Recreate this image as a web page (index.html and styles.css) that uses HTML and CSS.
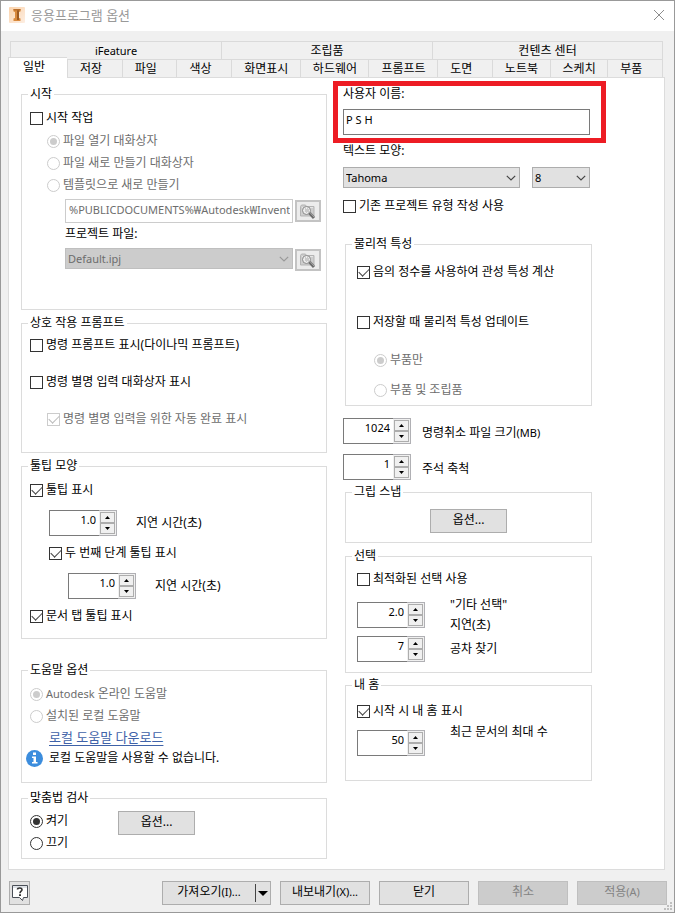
FILE: index.html
```html
<!DOCTYPE html>
<html lang="ko">
<head>
<meta charset="utf-8">
<title>응용프로그램 옵션</title>
<link rel="stylesheet" href="styles.css">
</head>
<body>
<svg class="defs" aria-hidden="true">
  <symbol id="browse" viewBox="0 0 18 18">
    <path d="M1.500 14V4.500l1-1.500h4l1 1.500h7.500v9.500z" fill="#cecece" stroke="#b4b4b4"/>
    <path d="M3 5.500h11" stroke="#e6e6e6"/>
    <circle cx="7.500" cy="8.500" r="4" fill="#ececec" stroke="#8a8a8a"/>
    <path d="M6 7h1M8 7h1M7 8h1M9 8h1M6 9h1M8 9h1M7 10h1M9 10h1" stroke="#a8a8a8"/>
    <path d="M10.500 11l4.500 5" stroke="#6c6c6c" stroke-width="3"/>
    <path d="M11 10.500l4 4.500" stroke="#a9a9a9"/>
  </symbol>
  <symbol id="chevron" viewBox="0 0 10 6">
    <path d="M.8.8L5 5 9.200.8" fill="none" stroke="currentColor" stroke-width="1.200"/>
  </symbol>
  <symbol id="up" viewBox="0 0 5 3"><path d="M0 3L2.500 0 5 3z" fill="#000"/></symbol>
  <symbol id="down" viewBox="0 0 5 3"><path d="M0 0h5L2.500 3z" fill="#000"/></symbol>
</svg>
<main class="window">
  <header class="titlebar">
    <svg class="app-icon" viewBox="0 0 16 16" aria-hidden="true">
      <defs><linearGradient id="tile" x1="0" y1="0" x2="1" y2="1"><stop offset="0" stop-color="#fbd3ac"/><stop offset="1" stop-color="#fdeee2"/></linearGradient></defs>
      <rect width="16" height="16" rx="1" fill="url(#tile)"/>
      <path d="M4.500 2h7v2.500l-1.500.5v6l1.500.5V14h-7v-2.500L6 11V5l-1.500-.5z" fill="#d98a3d"/>
      <path d="M8 3h2v10H8z" fill="#9c5a22"/>
      <path d="M4.500 2h7v1.500h-7z" fill="#b96f2c"/>
    </svg>
    <h1>응용프로그램 옵션</h1>
    <button class="close" type="button" aria-label="닫기">
      <svg viewBox="0 0 12 12" aria-hidden="true"><path d="M1 1l10 10M11 1L1 11" stroke="#8c8c8c" fill="none"/></svg>
    </button>
  </header>

  <nav class="tabs" role="tablist">
    <div class="tab-row top">
      <button class="tab" type="button" role="tab"><span class="latin">iFeature</span></button>
      <button class="tab" type="button" role="tab">조립품</button>
      <button class="tab wide" type="button" role="tab">컨텐츠 센터</button>
    </div>
    <div class="tab-row">
      <button class="tab selected" type="button" role="tab" aria-selected="true">일반</button>
      <button class="tab" type="button" role="tab">저장</button>
      <button class="tab" type="button" role="tab">파일</button>
      <button class="tab" type="button" role="tab">색상</button>
      <button class="tab long" type="button" role="tab">화면표시</button>
      <button class="tab long" type="button" role="tab">하드웨어</button>
      <button class="tab long" type="button" role="tab">프롬프트</button>
      <button class="tab" type="button" role="tab">도면</button>
      <button class="tab medium" type="button" role="tab">노트북</button>
      <button class="tab medium" type="button" role="tab">스케치</button>
      <button class="tab" type="button" role="tab">부품</button>
    </div>
  </nav>

  <form class="panel">
    <div class="column left">
      <fieldset class="start">
        <legend>시작</legend>
        <label class="row"><input type="checkbox">시작 작업</label>
        <div class="nested">
          <label class="row"><input type="radio" name="startup" checked disabled>파일 열기 대화상자</label>
          <label class="row"><input type="radio" name="startup" disabled>파일 새로 만들기 대화상자</label>
          <label class="row"><input type="radio" name="startup" disabled>템플릿으로 새로 만들기</label>
        </div>
        <div class="files">
          <div class="file-row">
            <input class="text path" type="text" aria-label="템플릿 경로" disabled value="%PUBLICDOCUMENTS%₩Autodesk₩Inventor">
            <button class="browse" type="button" aria-label="템플릿 찾아보기"><svg aria-hidden="true"><use href="#browse"/></svg></button>
          </div>
          <label class="row" for="project">프로젝트 파일:</label>
          <div class="file-row">
            <div class="select"><select id="project" disabled><option>Default.ipj</option></select><svg aria-hidden="true"><use href="#chevron"/></svg></div>
            <button class="browse" type="button" aria-label="프로젝트 찾아보기"><svg aria-hidden="true"><use href="#browse"/></svg></button>
          </div>
        </div>
      </fieldset>

      <fieldset class="prompts">
        <legend>상호 작용 프롬프트</legend>
        <label class="row"><input type="checkbox">명령 프롬프트 표시(다이나믹 프롬프트)</label>
        <label class="row"><input type="checkbox">명령 별명 입력 대화상자 표시</label>
        <label class="row nested"><input type="checkbox" checked disabled>명령 별명 입력을 위한 자동 완료 표시</label>
      </fieldset>

      <fieldset class="tooltips">
        <legend>툴팁 모양</legend>
        <label class="row"><input type="checkbox" checked>툴팁 표시</label>
        <div class="spin-row indent">
          <div class="spinner"><input id="delay1" type="text" value="1.0"><span class="arrows"><button type="button" aria-label="증가"><svg><use href="#up"/></svg></button><button type="button" aria-label="감소"><svg><use href="#down"/></svg></button></span></div>
          <label for="delay1">지연 시간(초)</label>
        </div>
        <label class="row indent"><input type="checkbox" checked>두 번째 단계 툴팁 표시</label>
        <div class="spin-row indent-more">
          <div class="spinner"><input id="delay2" type="text" value="1.0"><span class="arrows"><button type="button" aria-label="증가"><svg><use href="#up"/></svg></button><button type="button" aria-label="감소"><svg><use href="#down"/></svg></button></span></div>
          <label for="delay2">지연 시간(초)</label>
        </div>
        <label class="row"><input type="checkbox" checked>문서 탭 툴팁 표시</label>
      </fieldset>

      <fieldset class="help">
        <legend>도움말 옵션</legend>
        <label class="row"><input type="radio" name="help" checked disabled><span><span class="latin">Autodesk</span> 온라인 도움말</span></label>
        <label class="row"><input type="radio" name="help" disabled>설치된 로컬 도움말</label>
        <a class="download" href="#">로컬 도움말 다운로드</a>
        <p class="notice">
          <svg viewBox="0 0 17 17" aria-hidden="true"><circle cx="8.500" cy="8.500" r="8.500" fill="#3c8ddd"/><path d="M7 2.500h3v2.500H7zM6 6.500h4V12h1.500v1.500H6V12h1.500V8H6z" fill="#fff"/></svg>
          로컬 도움말을 사용할 수 없습니다.
        </p>
      </fieldset>

      <fieldset class="spelling">
        <legend>맞춤법 검사</legend>
        <div class="spelling-body">
          <div>
            <label class="row"><input type="radio" name="spell" checked>켜기</label>
            <label class="row"><input type="radio" name="spell">끄기</label>
          </div>
          <button class="button" type="button">옵션...</button>
        </div>
      </fieldset>
    </div>

    <div class="column right">
      <div class="highlight">
        <label for="user">사용자 이름:</label>
        <input class="text" id="user" type="text" value="P S H">
      </div>
      <div class="fields">
        <label class="caption" for="font">텍스트 모양:</label>
        <div class="font-row">
          <div class="select family"><select id="font"><option>Tahoma</option></select><svg aria-hidden="true"><use href="#chevron"/></svg></div>
          <div class="select size"><select aria-label="글꼴 크기"><option>8</option></select><svg aria-hidden="true"><use href="#chevron"/></svg></div>
        </div>
        <label class="row legacy"><input type="checkbox">기존 프로젝트 유형 작성 사용</label>
      </div>

      <fieldset class="physical">
        <legend>물리적 특성</legend>
        <label class="row"><input type="checkbox" checked>음의 정수를 사용하여 관성 특성 계산</label>
        <label class="row update"><input type="checkbox">저장할 때 물리적 특성 업데이트</label>
        <label class="row nested parts"><input type="radio" name="update" checked disabled>부품만</label>
        <label class="row nested"><input type="radio" name="update" disabled>부품 및 조립품</label>
      </fieldset>

      <div class="fields numbers">
        <div class="spin-row">
          <div class="spinner"><input id="undo" type="text" value="1024"><span class="arrows"><button type="button" aria-label="증가"><svg><use href="#up"/></svg></button><button type="button" aria-label="감소"><svg><use href="#down"/></svg></button></span></div>
          <label for="undo">명령취소 파일 크기<span class="latin">(MB)</span></label>
        </div>
        <div class="spin-row">
          <div class="spinner"><input id="scale" type="text" value="1"><span class="arrows"><button type="button" aria-label="증가"><svg><use href="#up"/></svg></button><button type="button" aria-label="감소"><svg><use href="#down"/></svg></button></span></div>
          <label for="scale">주석 축척</label>
        </div>
      </div>

      <fieldset class="grip">
        <legend>그립 스냅</legend>
        <button class="button" type="button">옵션...</button>
      </fieldset>

      <fieldset class="selection">
        <legend>선택</legend>
        <label class="row"><input type="checkbox">최적화된 선택 사용</label>
        <div class="spin-row two-line">
          <div class="spinner"><input id="other" type="text" value="2.0"><span class="arrows"><button type="button" aria-label="증가"><svg><use href="#up"/></svg></button><button type="button" aria-label="감소"><svg><use href="#down"/></svg></button></span></div>
          <label for="other">"기타 선택"<br>지연(초)</label>
        </div>
        <div class="spin-row">
          <div class="spinner"><input id="tolerance" type="text" value="7"><span class="arrows"><button type="button" aria-label="증가"><svg><use href="#up"/></svg></button><button type="button" aria-label="감소"><svg><use href="#down"/></svg></button></span></div>
          <label for="tolerance">공차 찾기</label>
        </div>
      </fieldset>

      <fieldset class="home">
        <legend>내 홈</legend>
        <label class="row"><input type="checkbox" checked>시작 시 내 홈 표시</label>
        <div class="spin-row recent">
          <div class="spinner"><input id="recent" type="text" value="50"><span class="arrows"><button type="button" aria-label="증가"><svg><use href="#up"/></svg></button><button type="button" aria-label="감소"><svg><use href="#down"/></svg></button></span></div>
          <label for="recent">최근 문서의 최대 수</label>
        </div>
      </fieldset>
    </div>
  </form>

  <footer class="footer">
    <button class="help-button" type="button" aria-label="도움말">
      <svg viewBox="0 0 18 18" aria-hidden="true"><path d="M1.500 1.500h15v12h-4l-1 3-3-3h-7z" fill="#fff" stroke="#4a4f57"/><path d="M2 2h14v2H2z" fill="#dfe3e8"/><path d="M6.500 5.500C6.500 3.500 11 3.300 11 5.700c0 1.600-2 1.500-2 3.600" fill="none" stroke="#333" stroke-width="1.600"/><path d="M8 10.200h2v1.800H8z" fill="#333"/></svg>
    </button>
    <div class="split">
      <button class="button" type="button">가져오기<span class="latin">(I)...</span></button>
      <button class="drop" type="button" aria-label="가져오기 옵션"><svg viewBox="0 0 10 5" aria-hidden="true"><path d="M0 0h10L5 5z"/></svg></button>
    </div>
    <button class="button" type="button">내보내기<span class="latin">(X)...</span></button>
    <button class="button" type="button">닫기</button>
    <button class="button" type="button" disabled>취소</button>
    <button class="button" type="button" disabled>적용<span class="latin">(A)</span></button>
    <svg class="grip-dots" viewBox="0 0 8 8" aria-hidden="true"><path d="M6 0h2v2H6zM3 3h2v2H3zM6 3h2v2H6zM0 6h2v2H0zM3 6h2v2H3zM6 6h2v2H6z" fill="#bfbfbf"/></svg>
  </footer>
</main>
</body>
</html>
```

FILE: styles.css
```css
* { box-sizing: border-box; }

body {
  margin: 0;
  background: #f0f0f0;
  color: #000;
  font: 12px/16px "Noto Sans", "Noto Sans CJK KR", sans-serif;
}

button, input, select { margin: 0; font: inherit; color: inherit; }
svg { display: block; }
.defs { position: absolute; width: 0; height: 0; }
.latin { font-size: 11px; }

.window {
  position: relative;
  min-height: 100vh;
  border: 1px solid #999;
  background: #f0f0f0;
}

.titlebar {
  display: flex;
  align-items: center;
  gap: 6px;
  height: 30px;
  padding: 0 9px 2px 8px;
  background: #fff;
}
.app-icon { width: 16px; height: 16px; }
.titlebar h1 {
  flex: 1;
  margin: 0;
  color: #999;
  font-size: 13px;
  font-weight: 400;
}
.close { padding: 0; border: 0; background: none; }
.close svg { width: 12px; height: 12px; }

/* Tabs */
.tabs { margin: 10px 11px 0 7px; }
.tab-row { display: flex; height: 18px; }
.tab-row.top { margin-left: 2px; }
.tab {
  flex: 42 1 0;
  padding: 0 0 0 12px;
  border: 1px solid #dadada;
  border-width: 1px 0 0 1px;
  background: #f0f0f0;
  text-align: left;
  white-space: nowrap;
}
.tab:last-child { border-right-width: 1px; }
.tab.long { flex-grow: 56; }
.tab.medium { flex-grow: 45; }
.top .tab { flex-grow: 211; padding: 0; text-align: center; }
.top .tab.wide { flex-grow: 230; }
.tab.selected {
  position: relative;
  flex: none;
  width: 59px;
  height: 21px;
  margin-top: -2px;
  padding: 0 0 3px 14px;
  background: #fff;
}

.panel {
  display: grid;
  grid-template-columns: 306fr 273fr;
  gap: 6px;
  margin: 0 9px 0 7px;
  padding: 3px 58px 10px 12px;
  border: 1px solid #dcdcdc;
  background: #fff;
}
.column { min-width: 0; }
.column.left { padding-top: 5px; }

/* Groups */
fieldset {
  min-width: 0;
  margin: 0;
  padding: 0 8px;
  border: 1px solid #dcdcdc;
}
legend {
  margin-left: -2px;
  padding: 0 2px;
  height: 16px;
}
.row {
  display: flex;
  align-items: center;
  gap: 3px;
  height: 22px;
  white-space: nowrap;
}
.row:has(:disabled) { color: #6d6d6d; }
.nested { margin-left: 17px; }
.indent { margin-left: 19px; }
.indent-more { margin-left: 38px; }

input[type="checkbox"], input[type="radio"] {
  display: grid;
  place-items: center;
  flex: none;
  width: 13px;
  height: 13px;
  border: 1px solid #333;
  background: #fff;
  appearance: none;
}
input[type="radio"] { border-radius: 50%; }
input[type="radio"]:checked::after {
  width: 7px;
  height: 7px;
  border-radius: 50%;
  background: #333;
  content: "";
}
input[type="checkbox"]:checked::after {
  width: 9px;
  height: 5px;
  margin-bottom: 3px;
  border: solid #444;
  border-width: 0 0 1px 1px;
  transform: rotate(-45deg);
  content: "";
}
input[type="checkbox"]:disabled, input[type="radio"]:disabled { border-color: #ccc; }
input[type="radio"]:disabled::after { background: #ccc; }
input[type="checkbox"]:disabled::after { border-color: #bbb; }

.text {
  width: 100%;
  min-width: 0;
  border: 1px solid #7a7a7a;
  border-radius: 0;
  background: #fff;
  padding: 0 2px 5px;
  font-size: 11px;
}

.select { position: relative; flex: 1; min-width: 0; }
.select select {
  display: block;
  width: 100%;
  height: 21px;
  padding: 0 20px 0 2px;
  border: 1px solid #adadad;
  border-radius: 0;
  background: #e1e1e1;
  font-size: 11px;
  appearance: none;
}
.select svg {
  position: absolute;
  top: 8px;
  right: 4px;
  width: 10px;
  height: 6px;
  color: #444;
  pointer-events: none;
}
.select select:disabled { border-color: #bfbfbf; background: #ccc; color: #6d6d6d; opacity: 1; }
.select select:disabled + svg { color: #999; }

.button {
  height: 24px;
  padding: 0 0 2px;
  border: 1px solid #adadad;
  background: #e1e1e1;
  white-space: nowrap;
}
.button:disabled { border-color: #bfbfbf; background: #ccc; color: #838383; }

/* Spinner */
.spin-row { display: flex; align-items: center; gap: 19px; }
.spinner {
  display: flex;
  flex: none;
  width: 68px;
  height: 26px;
}
.spinner input {
  width: 50px;
  padding: 0 3px 6px;
  border: 1px solid #7a7a7a;
  border-right: 0;
  border-radius: 0;
  background: #fff;
  font-size: 11px;
  text-align: right;
}
.arrows {
  display: grid;
  grid-template-rows: 1fr 1fr;
  width: 18px;
  padding: 1px;
  border: 1px solid #b0b0b4;
  border-left: 0;
  background: #f0f0f0;
}
.arrows button {
  display: grid;
  place-items: center;
  padding: 0;
  border: 1px solid #adadad;
  background: #f0f0f0;
}
.arrows svg { width: 5px; height: 3px; }

/* Left column */
.start { padding-top: 5px; padding-bottom: 38px; }
.start > .nested { margin-top: 1px; }
.files { margin: 3px -3px 0 35px; }
.files .row { margin-bottom: 3px; }
.file-row { display: flex; gap: 2px; }
.path { height: 24px; padding: 0 2px 4px 3px; border-color: #ccc; color: #6d6d6d; }
.browse {
  display: grid;
  place-items: center;
  flex: none;
  width: 26px;
  height: 22px;
  margin-top: 1px;
  padding: 0;
  border: 2px solid #c3c3c3;
  background: #ececec;
}
.browse svg { width: 18px; height: 18px; }

.prompts { margin-top: 5px; padding-top: 3px; padding-bottom: 22px; }
.prompts .row + .row { margin-top: 15px; }

.tooltips { margin-top: 5px; padding-top: 5px; padding-bottom: 11px; }
.tooltips .spin-row { margin-top: 9px; margin-bottom: 6px; }

.help { margin-top: 23px; padding-top: 5px; padding-bottom: 13px; }
.download {
  display: block;
  width: fit-content;
  height: 20px;
  margin-left: 19px;
  color: #3f62a8;
  font-size: 13px;
  line-height: 20px;
  text-underline-offset: 3px;
}
.notice {
  display: flex;
  align-items: center;
  gap: 6px;
  height: 22px;
  margin: 0 0 0 -4px;
}
.notice svg { width: 17px; height: 17px; }

.spelling { margin-top: 7px; padding-top: 4px; padding-bottom: 4px; }
.spelling-body { display: grid; grid-template-columns: 88px 77px; }
.spelling .button { margin-top: 1px; }

/* Right column */
.highlight {
  padding: 0 11px 3px 5px;
  border: 5px solid #ed1c24;
}
.highlight label { display: block; }
.highlight .text { display: block; height: 26px; margin-top: 7px; }
.fields { margin: 0 16px 0 10px; }
.caption { display: block; }
.font-row { display: flex; gap: 12px; margin-top: 8px; }
.family { flex-grow: 177; }
.size { flex-grow: 58; }
.legacy { margin-top: 7px; }

.right fieldset { margin-left: 12px; margin-right: 14px; padding-left: 11px; }
.right legend { margin-left: -5px; }

.physical { margin-top: 19px; padding-top: 9px; padding-bottom: 4px; }
.update { margin-top: 28px; }
.parts { margin-top: 16px; margin-bottom: 8px; }

.numbers { display: grid; gap: 10px; margin-top: 12px; }
.numbers .spin-row { gap: 11px; }
.numbers .spin-row label { padding-top: 4px; }

.right .grip { margin-top: 4px; padding: 9px 11px; }
.grip .button { display: block; width: 77px; margin: 0 auto; }

.selection { margin-top: 5px; padding-top: 4px; padding-bottom: 10px; }
.selection .spin-row, .home .spin-row { gap: 25px; }
.two-line { margin-top: 5px; margin-bottom: 1px; }
.two-line label { line-height: 20px; }

.home { margin-top: 4px; padding-top: 7px; padding-bottom: 24px; }
.recent { height: 32px; margin-top: 2px; align-items: flex-end; }
.recent label { align-self: flex-start; }

/* Footer */
.footer {
  display: flex;
  gap: 9px;
  padding: 11px 7px 7px 8px;
}
.footer .button { flex: 0 0 90px; }
.help-button {
  display: grid;
  place-items: center;
  width: 21px;
  height: 24px;
  margin-right: auto;
  padding: 0;
  border: 1px solid #adadad;
  background: #e1e1e1;
}
.help-button svg { width: 18px; height: 18px; }
.split {
  display: flex;
  width: 109px;
  border: 1px solid #adadad;
  background: #e1e1e1;
}
.footer .split .button { flex: 1; height: 22px; border: 0; }
.drop {
  width: 15px;
  height: 18px;
  margin-top: 2px;
  padding: 0 2px;
  border: 0;
  border-left: 1px solid #444;
  background: none;
}
.drop svg { width: 10px; height: 5px; }
.grip-dots {
  position: absolute;
  right: 2px;
  bottom: 2px;
  width: 8px;
  height: 8px;
}
```
